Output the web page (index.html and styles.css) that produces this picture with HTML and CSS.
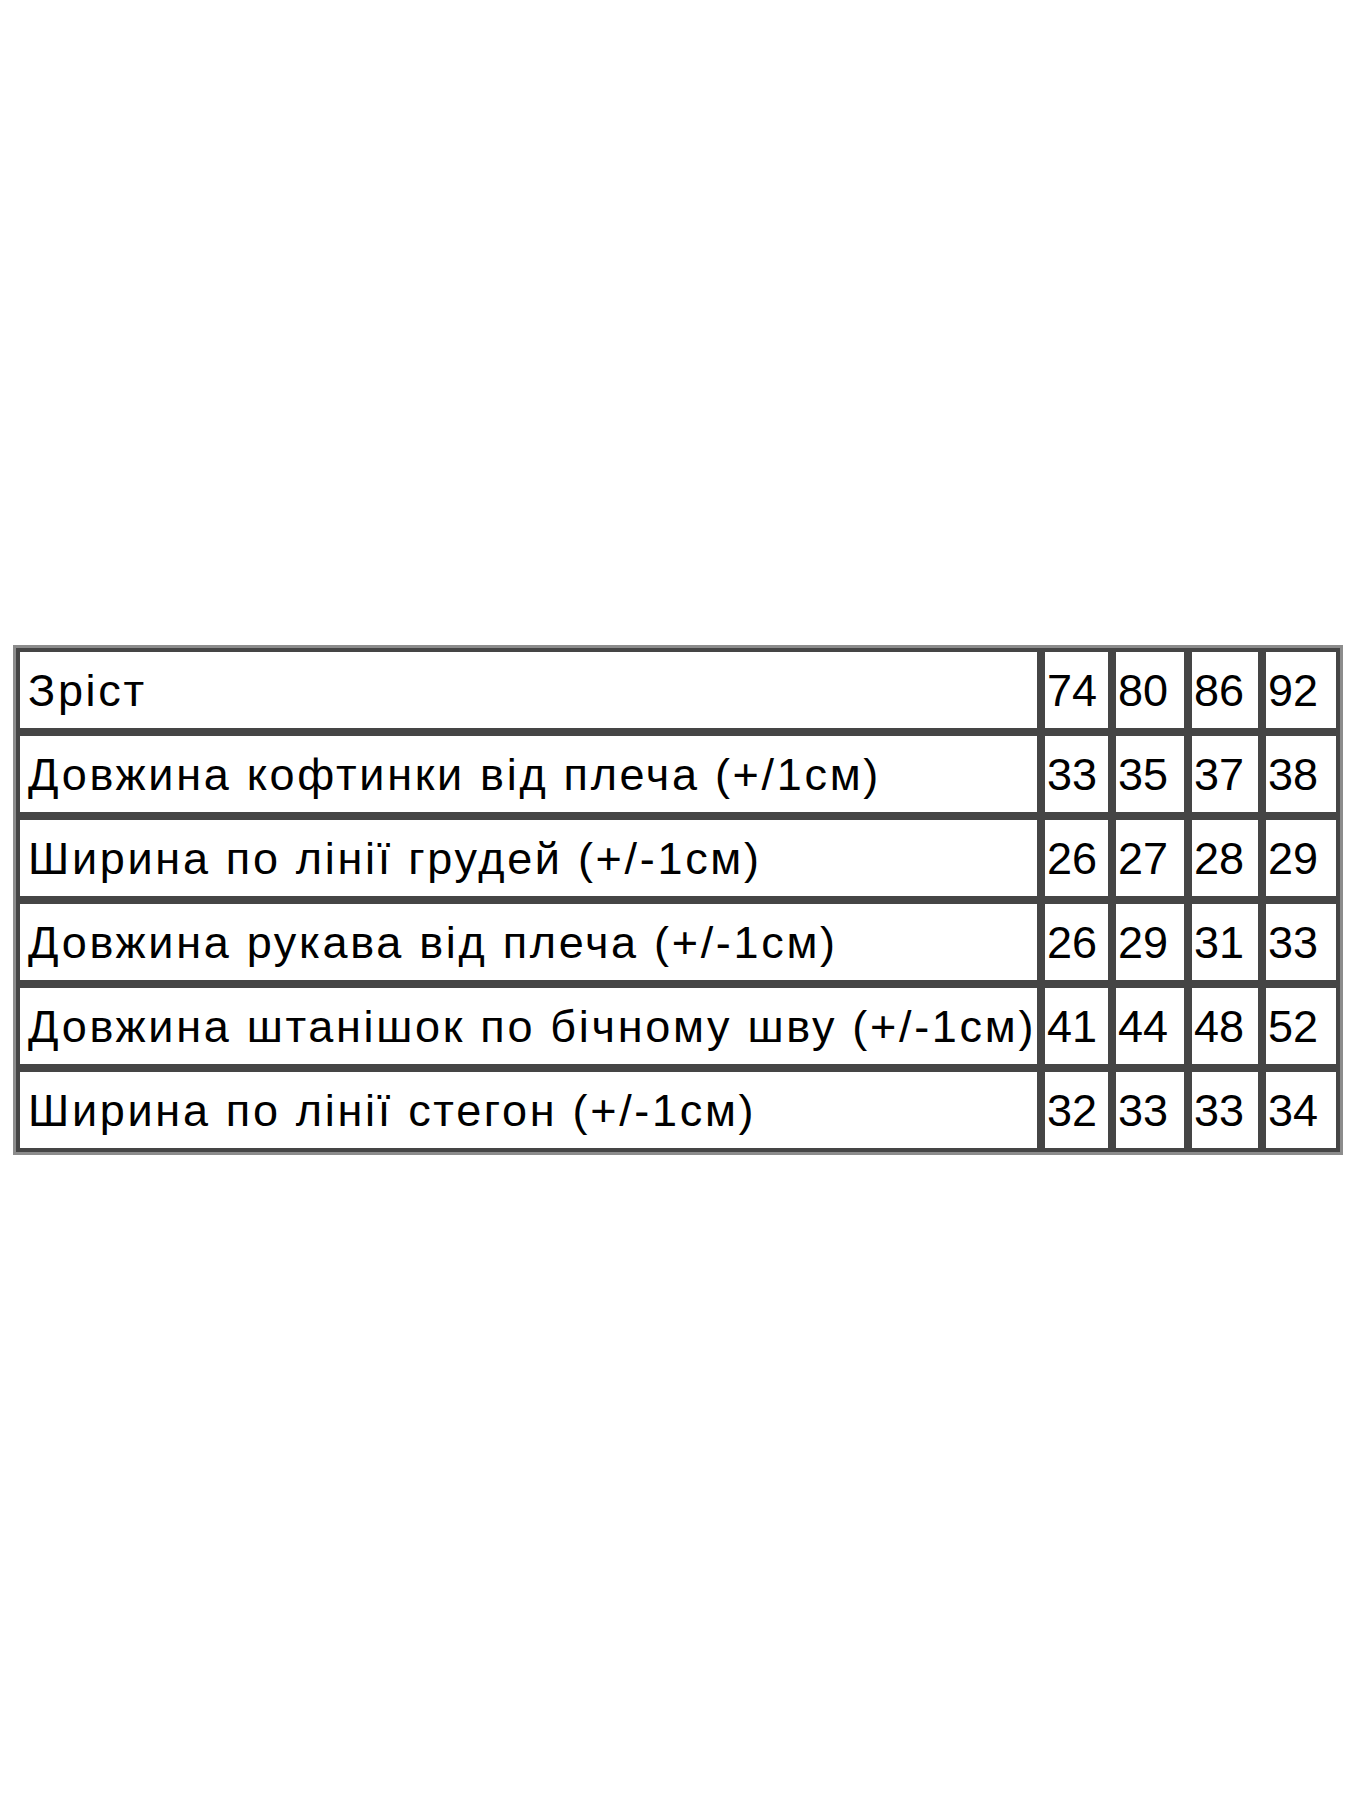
FILE: index.html
```html
<!DOCTYPE html>
<html lang="uk">
<head>
<meta charset="utf-8">
<title>Розмірна сітка</title>
<link rel="stylesheet" href="styles.css">
</head>
<body>
<main class="page">
  <table class="sizes">
    <colgroup>
      <col class="col-label">
      <col class="col-n1">
      <col class="col-n2">
      <col class="col-n3">
      <col class="col-n4">
    </colgroup>
    <tbody>
      <tr><td class="label">Зріст</td><td>74</td><td>80</td><td>86</td><td>92</td></tr>
      <tr><td class="label">Довжина кофтинки від плеча (+/1см)</td><td>33</td><td>35</td><td>37</td><td>38</td></tr>
      <tr><td class="label">Ширина по лінії грудей (+/-1см)</td><td>26</td><td>27</td><td>28</td><td>29</td></tr>
      <tr><td class="label">Довжина рукава від плеча (+/-1см)</td><td>26</td><td>29</td><td>31</td><td>33</td></tr>
      <tr><td class="label">Довжина штанішок по бічному шву (+/-1см)</td><td>41</td><td>44</td><td>48</td><td>52</td></tr>
      <tr><td class="label">Ширина по лінії стегон (+/-1см)</td><td>32</td><td>33</td><td>33</td><td>34</td></tr>
    </tbody>
  </table>
</main>
</body>
</html>
```
FILE: styles.css
```css
html, body {
  margin: 0;
  padding: 0;
  background: #ffffff;
}

.page {
  min-height: 1800px;
  display: flex;
  align-items: center;
  justify-content: flex-start;
  padding-left: 13px;
  box-sizing: border-box;
}

.sizes {
  table-layout: fixed;
  width: 1330px;
  border-collapse: separate;
  border-spacing: 0;
  border: 3px solid #8c8c8c;
  font-family: "Liberation Sans", Arial, sans-serif;
  font-size: 45px;
  color: #000;
}

.col-label { width: 1025px; }
.col-n1 { width: 71px; }
.col-n2 { width: 76px; }
.col-n3 { width: 74px; }
.col-n4 { width: 78px; }

.sizes tr {
  height: 84px;
}

.sizes td {
  border: 4px solid #454545;
  padding: 0 0 0 2px;
  vertical-align: middle;
  white-space: nowrap;
  overflow: hidden;
  line-height: 1;
}

.sizes td.label {
  padding-left: 8px;
  letter-spacing: 2.7px;
}
```
